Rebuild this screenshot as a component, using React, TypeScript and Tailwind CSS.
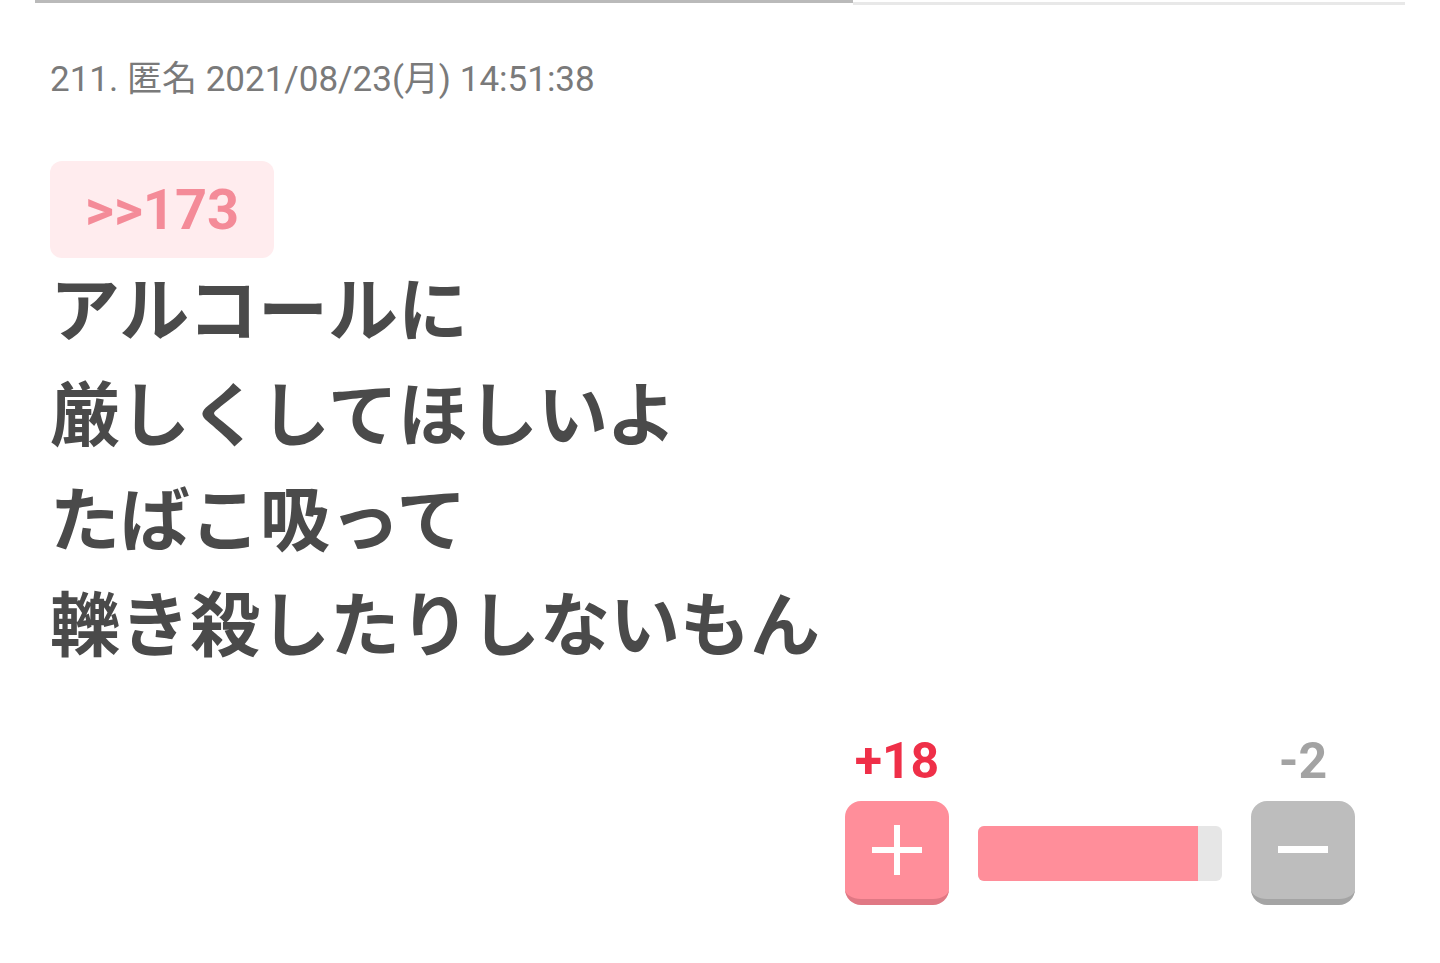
interface Comment {
  no: number;
  name: string;
  postedAt: string;
  replyTo: number;
  lines: string[];
  plus: number;
  minus: number;
}

const comment: Comment = {
  no: 211,
  name: '匿名',
  postedAt: '2021/08/23(月) 14:51:38',
  replyTo: 173,
  lines: ['アルコールに', '厳しくしてほしいよ', 'たばこ吸って', '轢き殺したりしないもん'],
  plus: 18,
  minus: 2,
};

function PlusMark() {
  return (
    <svg width="50" height="50" viewBox="0 0 50 50" fill="white">
      <rect x="22" y="0" width="6" height="50" />
      <rect x="0" y="22" width="50" height="6" />
    </svg>
  );
}

function MinusMark() {
  return (
    <svg width="50" height="8" viewBox="0 0 50 8" fill="white">
      <rect x="0" y="0" width="50" height="7" />
    </svg>
  );
}

function VoteBox({ plus, minus }: { plus: number; minus: number }) {
  const total = plus + minus;
  const ratio = total === 0 ? 50 : (plus / total) * 100;

  return (
    <div className="ml-auto mr-[50px] flex items-end gap-[29px]">
      <div className="flex w-[104px] flex-col items-center">
        <span className="mb-[15px] text-[50px] font-bold leading-none text-[#ef2f48]">+{plus}</span>
        <button
          type="button"
          className="flex h-[104px] w-[104px] items-center justify-center rounded-[16px] border-b-[6px] border-[#e07884] bg-[#ff8e9a]"
        >
          <PlusMark />
        </button>
      </div>

      <div className="mb-[24px] flex h-[55px] w-[244px] overflow-hidden rounded-[6px] bg-[#e6e6e6]">
        <div className="h-full bg-[#ff8e9a]" style={{ width: `${ratio}%` }} />
      </div>

      <div className="flex w-[104px] flex-col items-center">
        <span className="mb-[15px] text-[50px] font-bold leading-none text-[#a3a3a3]">-{minus}</span>
        <button
          type="button"
          className="flex h-[104px] w-[104px] items-center justify-center rounded-[16px] border-b-[6px] border-[#a4a4a4] bg-[#bdbdbd]"
        >
          <MinusMark />
        </button>
      </div>
    </div>
  );
}

export default function App() {
  return (
    <div className="min-h-screen bg-white px-[35px] font-['Roboto','Noto_Sans_CJK_JP',sans-serif]">
      {/* scroll progress */}
      <div className="flex h-[5px] items-start">
        <div className="h-[3px] w-[818px] bg-[#bababa]" />
        <div className="mt-[2px] h-[3px] flex-1 bg-[#e8e8e8]" />
      </div>

      <div className="px-[15px]">
        <p className="mt-[54px] text-[35px] leading-[42px] text-[#7a7a7a]">
          {comment.no}. {comment.name} {comment.postedAt}
        </p>

        <div className="mt-[60px] inline-flex h-[97px] items-center rounded-[12px] bg-[#ffecee] px-[35px]">
          <span className="text-[56px] font-bold leading-none text-[#f48b98]">&gt;&gt;{comment.replyTo}</span>
        </div>

        <div className="-mt-[5px] font-['Noto_Sans_CJK_JP',sans-serif] text-[70px] font-bold leading-[105px] text-[#4a4a4a]">
          {comment.lines.map((line) => (
            <p key={line}>{line}</p>
          ))}
        </div>
      </div>

      <div className="mt-[63px] flex">
        <VoteBox plus={comment.plus} minus={comment.minus} />
      </div>
    </div>
  );
}
